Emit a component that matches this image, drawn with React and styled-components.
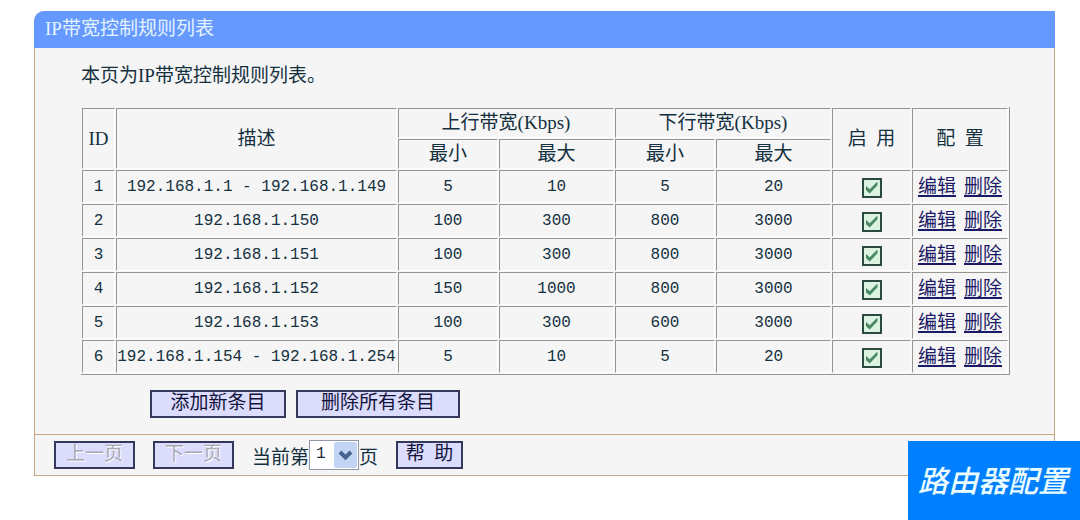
import React, { useState } from 'react'
import styled, { createGlobalStyle } from 'styled-components';

const GlobalStyle = createGlobalStyle`
    * {
        box-sizing: border-box;
    }
    body {
        margin: 0;
        background-color: #ffffff;
        color: #14303f;
        font-family: "Liberation Serif", "Noto Sans CJK SC", serif;
        font-size: 19px;
        line-height: 24px;
    }
`;

const Page = styled.main`
    padding: 11px 25px 44px 34px;
`;

const Panel = styled.section`
    border: 1px solid #c9a684;
    border-top: none;
    border-top-left-radius: 10px;
    background-color: #f5f5f5;
`;

const PanelTitle = styled.h1`
    margin: 0 -1px;
    height: 37px;
    padding: 6px 11px;
    border-top-left-radius: 10px;
    background-color: #6699ff;
    color: #e4f4ff;
    font-size: 19px;
    font-weight: normal;
    line-height: 24px;
`;

const PanelBody = styled.div`
    padding: 16px 47px 16px 46px;
`;

const Intro = styled.p`
    margin: 0 0 19px;
`;

const RuleTable = styled.table`
    width: 100%;
    table-layout: fixed;
    border-collapse: separate;
    border-spacing: 1px;
    border-right: 1px solid #98958f;
    border-bottom: 1px solid #98958f;
`;

const HeadCell = styled.th`
    height: 30px;
    padding: 0;
    border: 1px solid #ffffff;
    border-top-color: #98958f;
    border-left-color: #98958f;
    font-weight: normal;
    line-height: 24px;
    white-space: pre;
`;

const Cell = styled.td`
    height: 33px;
    padding: ${({ $low }) => ($low ? '2px 0 0' : '0')};
    border: 1px solid #ffffff;
    border-top-color: #98958f;
    border-left-color: #98958f;
    font-family: "Liberation Mono", "Noto Sans CJK SC", monospace;
    font-size: 16px;
    line-height: 24px;
    text-align: center;
    white-space: nowrap;
`;

const Actions = styled.div`
    display: flex;
    justify-content: center;
    gap: 8px;
    font-size: 19px;
`;

const ActionLink = styled.a`
    color: #1b1a66;
    text-decoration: underline;
    text-decoration-thickness: 2px;
    text-underline-offset: 2px;
`;

const CheckBox = styled.input`
    appearance: none;
    display: block;
    width: 20px;
    height: 20px;
    margin: 0 auto;
    border: 2px solid #2b4a41;
    background-color: #dcf3e2;
    &:checked::after {
        content: "";
        display: block;
        width: 12px;
        height: 12px;
        margin: 2px;
        background-color: #4a8a62;
        clip-path: polygon(0 34%, 35% 64%, 100% 0, 100% 32%, 35% 100%, 0 68%);
    }
`;

const ButtonRow = styled.div`
    display: flex;
    gap: 10px;
    padding: 15px 0 0 69px;
`;

const Button = styled.button`
    width: ${({ $width }) => $width}px;
    height: 28px;
    padding: 0 0 3px;
    border: 2px solid #33385c;
    border-radius: 0;
    background-color: #dcdcfd;
    color: #12123a;
    font-family: inherit;
    font-size: 19px;
    line-height: 21px;
    white-space: pre;
    &:disabled {
        color: #a9a9b4;
        text-shadow: 1px 1px 0 #ffffff;
    }
`;

const PanelFooter = styled.footer`
    display: flex;
    align-items: center;
    gap: 18px;
    height: 41px;
    padding: 0 19px;
    border-top: 1px solid #c9a684;
`;

const PageLabel = styled.label`
    display: flex;
    align-items: flex-end;
`;

const SelectBox = styled.span`
    position: relative;
    display: block;
    width: 50px;
    height: 30px;
`;

const PageSelect = styled.select`
    appearance: none;
    width: 100%;
    height: 100%;
    padding: 0 26px 2px 6px;
    border: 1px solid #8f98a6;
    border-radius: 0;
    background-color: #ffffff;
    color: #1c2838;
    font-family: "Liberation Mono", monospace;
    font-size: 16px;
`;

const SelectArrow = styled.svg`
    position: absolute;
    top: 2px;
    right: 2px;
    pointer-events: none;
`;

const Badge = styled.div`
    position: fixed;
    right: 0;
    bottom: 0;
    padding: 23px 12px 20px 10px;
    background-color: #0080ff;
    color: #eafcff;
    font-size: 30px;
    font-style: italic;
    font-weight: 500;
    line-height: 36px;
`;

const columnWidths = [33, 281, 100, 115, 100, 115, 79, 96];

const initialRules = [
  { id: 1, range: '192.168.1.1 - 192.168.1.149', limits: [5, 10, 5, 20], enabled: true },
  { id: 2, range: '192.168.1.150', limits: [100, 300, 800, 3000], enabled: true },
  { id: 3, range: '192.168.1.151', limits: [100, 300, 800, 3000], enabled: true },
  { id: 4, range: '192.168.1.152', limits: [150, 1000, 800, 3000], enabled: true },
  { id: 5, range: '192.168.1.153', limits: [100, 300, 600, 3000], enabled: true },
  { id: 6, range: '192.168.1.154 - 192.168.1.254', limits: [5, 10, 5, 20], enabled: true },
];

const RuleRow = ({ rule, onToggle }) => {
  return (
    <tr>
        <Cell>{rule.id}</Cell>
        <Cell>{rule.range}</Cell>
        {rule.limits.map((limit, i) => <Cell key={i}>{limit}</Cell>)}
        <Cell $low>
            <CheckBox
                type="checkbox"
                aria-label={`启用 ${rule.id}`}
                checked={rule.enabled}
                onChange={() => onToggle(rule.id)}
            />
        </Cell>
        <Cell $low>
            <Actions>
                <ActionLink href="#edit">编辑</ActionLink>
                <ActionLink href="#delete">删除</ActionLink>
            </Actions>
        </Cell>
    </tr>
  )
}

const App = () => {
  const [rules, setRules] = useState(initialRules);

  const toggleRule = (id) => {
    setRules(rules.map((rule) => (rule.id === id ? { ...rule, enabled: !rule.enabled } : rule)));
  };

  return (
    <>
        <GlobalStyle />
        <Page>
            <Panel>
                <PanelTitle>IP带宽控制规则列表</PanelTitle>
                <PanelBody>
                    <Intro>本页为IP带宽控制规则列表。</Intro>
                    <RuleTable>
                        <colgroup>
                            {columnWidths.map((width, i) => <col key={i} width={width} />)}
                        </colgroup>
                        <thead>
                            <tr>
                                <HeadCell rowSpan={2}>ID</HeadCell>
                                <HeadCell rowSpan={2}>描述</HeadCell>
                                <HeadCell colSpan={2}>上行带宽(Kbps)</HeadCell>
                                <HeadCell colSpan={2}>下行带宽(Kbps)</HeadCell>
                                <HeadCell rowSpan={2}>{'启  用'}</HeadCell>
                                <HeadCell rowSpan={2}>{'配  置'}</HeadCell>
                            </tr>
                            <tr>
                                <HeadCell>最小</HeadCell>
                                <HeadCell>最大</HeadCell>
                                <HeadCell>最小</HeadCell>
                                <HeadCell>最大</HeadCell>
                            </tr>
                        </thead>
                        <tbody>
                            {rules.map((rule) => <RuleRow key={rule.id} rule={rule} onToggle={toggleRule} />)}
                        </tbody>
                    </RuleTable>
                    <ButtonRow>
                        <Button type="button" $width={136}>添加新条目</Button>
                        <Button type="button" $width={164}>删除所有条目</Button>
                    </ButtonRow>
                </PanelBody>
                <PanelFooter>
                    <Button type="button" $width={81} disabled>上一页</Button>
                    <Button type="button" $width={81} disabled>下一页</Button>
                    <PageLabel>
                        当前第
                        <SelectBox>
                            <PageSelect defaultValue="1">
                                <option value="1">1</option>
                            </PageSelect>
                            <SelectArrow width="23" height="26" viewBox="0 0 23 26" aria-hidden="true">
                                <rect width="23" height="26" rx="2" fill="#c3d5f5" />
                                <path d="M6 10l5.500 5.500L17 10" fill="none" stroke="#46628c" strokeWidth="4" />
                            </SelectArrow>
                        </SelectBox>
                        页
                    </PageLabel>
                    <Button type="button" $width={67}>{'帮  助'}</Button>
                </PanelFooter>
            </Panel>
        </Page>
        <Badge>路由器配置</Badge>
    </>
  )
}

export default App
